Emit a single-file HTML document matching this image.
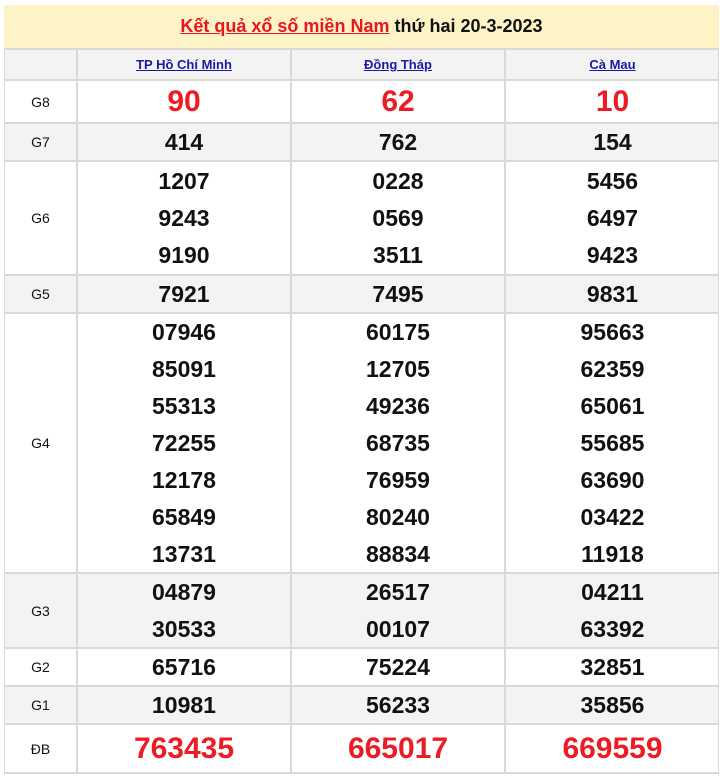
<!DOCTYPE html>
<html><head><meta charset="utf-8"><style>
body{margin:0;width:720px;height:776px;background:#fff;font-family:"Liberation Sans",Arial,sans-serif;position:relative;overflow:hidden}
.t{position:absolute;left:4px;top:5px;width:715px;height:43px;background:#fdf3c6;text-align:center;line-height:43px;font-size:18px;font-weight:bold;color:#111}
.t a{color:#e8161f;text-decoration:underline}
.r{position:absolute;left:4px;width:715px;box-sizing:border-box;border:1px solid #ddd8d2;border-top:2px solid #ddd8d2}
.c{position:absolute;top:0;bottom:0;border-left:2px solid #ddd8d2;box-sizing:border-box;display:flex;flex-direction:column;justify-content:center;align-items:center}
.l{left:0;width:71px;border-left:none;font-size:14px;color:#111}
.a{left:71px;width:214px}.b{left:285px;width:214px}.d{left:499px;width:215px}
.n{font-size:23px;font-weight:bold;color:#111;line-height:37px}
.red{font-size:30px;font-weight:bold;color:#ed1c24}
.h a{color:#1a1aa6;font-size:13px;font-weight:bold;text-decoration:underline}
.g{background:#f3f3f3}
</style></head><body>
<div class="t"><a>Kết quả xổ số miền Nam</a> thứ hai 20-3-2023</div>

<div class="r g h" style="top:48px;height:32px"><div class="c l"></div><div class="c a"><a>TP Hồ Chí Minh</a></div><div class="c b"><a>Đồng Tháp</a></div><div class="c d"><a>Cà Mau</a></div></div>

<div class="r" style="top:79px;height:44px"><div class="c l">G8</div><div class="c a red">90</div><div class="c b red">62</div><div class="c d red">10</div></div>

<div class="r g" style="top:122px;height:39px"><div class="c l">G7</div><div class="c a n">414</div><div class="c b n">762</div><div class="c d n">154</div></div>

<div class="r" style="top:160px;height:115px"><div class="c l">G6</div><div class="c a n"><div>1207</div><div>9243</div><div>9190</div></div><div class="c b n"><div>0228</div><div>0569</div><div>3511</div></div><div class="c d n"><div>5456</div><div>6497</div><div>9423</div></div></div>

<div class="r g" style="top:274px;height:39px"><div class="c l">G5</div><div class="c a n">7921</div><div class="c b n">7495</div><div class="c d n">9831</div></div>

<div class="r" style="top:312px;height:261px"><div class="c l">G4</div>
<div class="c a n"><div>07946</div><div>85091</div><div>55313</div><div>72255</div><div>12178</div><div>65849</div><div>13731</div></div>
<div class="c b n"><div>60175</div><div>12705</div><div>49236</div><div>68735</div><div>76959</div><div>80240</div><div>88834</div></div>
<div class="c d n"><div>95663</div><div>62359</div><div>65061</div><div>55685</div><div>63690</div><div>03422</div><div>11918</div></div></div>

<div class="r g" style="top:572px;height:76px"><div class="c l">G3</div><div class="c a n"><div>04879</div><div>30533</div></div><div class="c b n"><div>26517</div><div>00107</div></div><div class="c d n"><div>04211</div><div>63392</div></div></div>

<div class="r" style="top:647px;height:39px"><div class="c l">G2</div><div class="c a n">65716</div><div class="c b n">75224</div><div class="c d n">32851</div></div>

<div class="r g" style="top:685px;height:39px"><div class="c l">G1</div><div class="c a n">10981</div><div class="c b n">56233</div><div class="c d n">35856</div></div>

<div class="r" style="top:723px;height:51px;border-bottom:2px solid #ddd8d2"><div class="c l">ĐB</div><div class="c a red">763435</div><div class="c b red">665017</div><div class="c d red">669559</div></div>
</body></html>
